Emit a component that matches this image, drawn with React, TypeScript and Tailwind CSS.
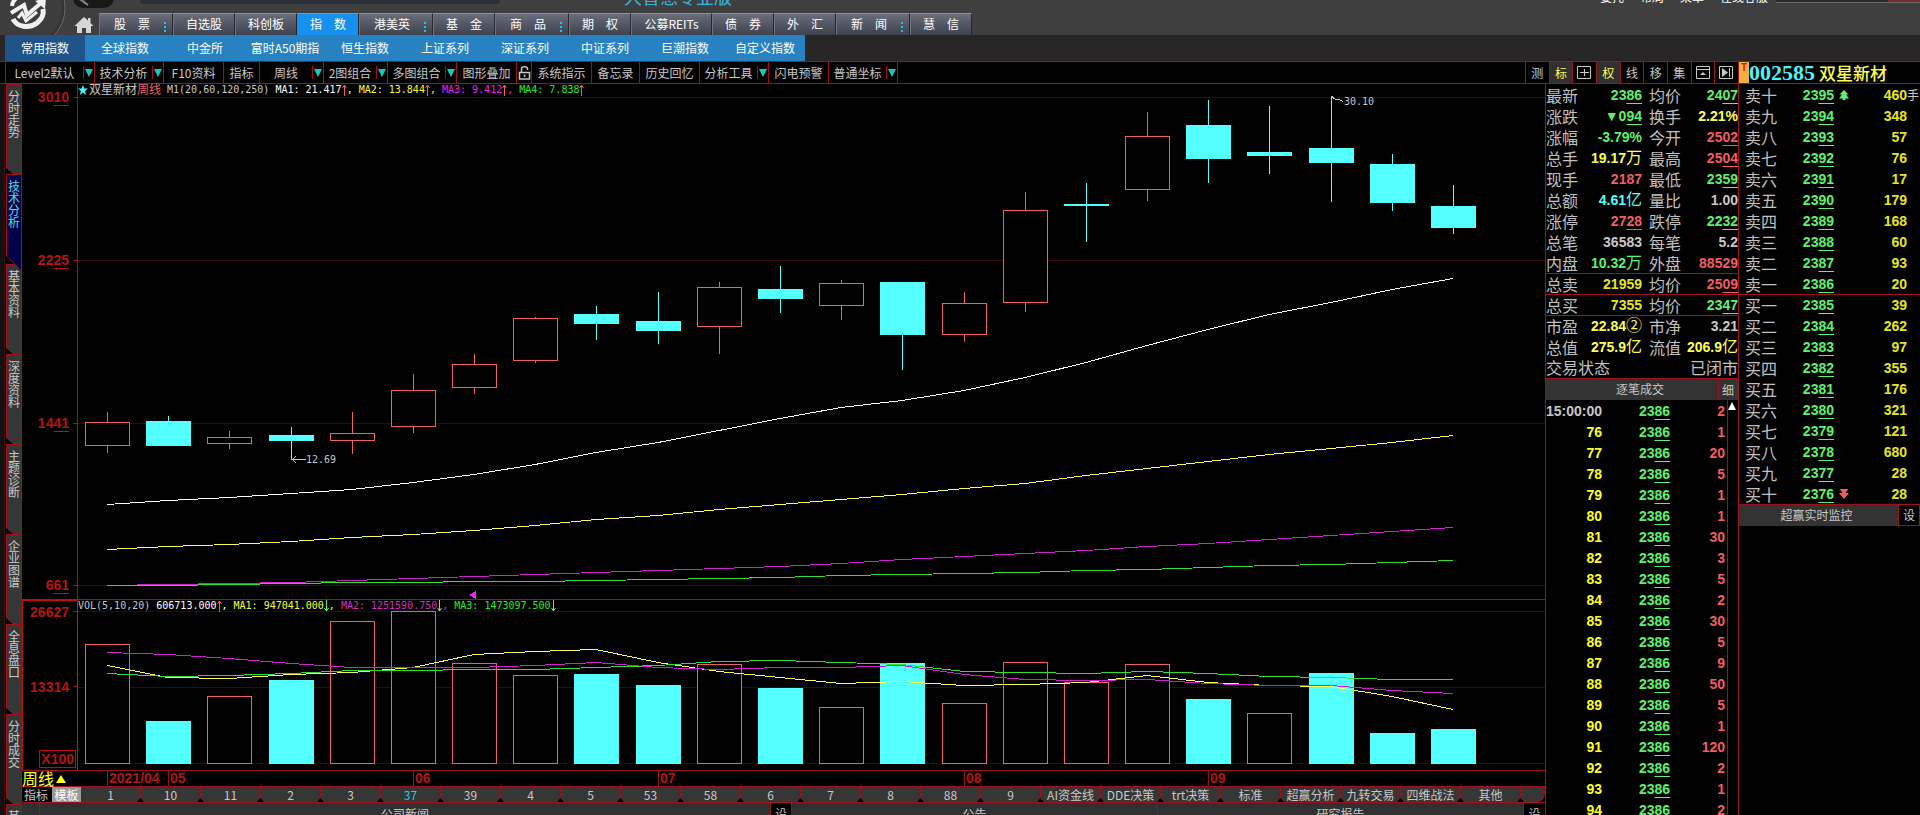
import React from 'react';
import { clsx } from 'clsx';

type Candle = [up: boolean, high: number, top: number, bottom: number, low: number];
type Volume = [up: boolean, top: number];

const STEP_X = 61.18;
const FIRST_X = 29;
const CHART_W = 1467;
const PRICE_H = 515;
const VOL_H = 171;
const VOL_BASE = 165;

const candles: Candle[] = [
  [true, 328, 338, 362, 369],
  [false, 332, 337, 362, 362],
  [true, 347, 353, 360, 365],
  [false, 343, 351, 357, 376],
  [true, 328, 349, 357, 370],
  [true, 290, 306, 343, 349],
  [true, 270, 280, 304, 310],
  [true, 233, 234, 277, 279],
  [false, 222, 230, 240, 256],
  [false, 208, 237, 247, 260],
  [true, 198, 203, 243, 270],
  [false, 182, 205, 215, 229],
  [true, 196, 199, 222, 236],
  [false, 198, 198, 251, 286],
  [true, 208, 219, 251, 258],
  [true, 108, 126, 219, 228],
  [false, 99, 120, 122, 158],
  [true, 28, 52, 106, 117],
  [false, 16, 41, 75, 99],
  [false, 22, 68, 72, 90],
  [false, 12, 64, 79, 118],
  [false, 70, 80, 119, 127],
  [false, 101, 122, 144, 150],
];

const volumes: Volume[] = [
  [true, 45], [false, 122], [true, 97], [false, 81], [true, 22], [true, 12], [true, 64], [true, 76],
  [false, 75], [false, 86], [true, 65], [false, 89], [true, 108], [false, 64], [true, 104], [true, 63],
  [true, 83], [true, 65], [false, 100], [true, 114], [false, 74], [false, 134], [false, 130],
];

const priceLines = [
  {
    color: '#ffffff',
    ys: [420, 416, 413, 409, 405, 398, 390, 380, 368, 358, 346, 334, 323, 316, 306, 293, 278, 261, 245, 230, 218, 205, 194],
  },
  {
    color: '#ffff54',
    ys: [465, 462, 460, 457, 453, 450, 446, 441, 435, 431, 425, 420, 415, 410, 404, 399, 391, 384, 377, 370, 364, 358, 351],
  },
  {
    color: '#d020d0',
    ys: [501, 500, 499, 498, 496, 494, 492, 490, 488, 486, 484, 482, 479, 475, 472, 469, 466, 462, 459, 455, 451, 447, 443],
  },
  {
    color: '#30e030',
    ys: [501, 501, 500, 499, 498, 498, 497, 497, 496, 495, 494, 493, 491, 490, 489, 488, 486, 485, 483, 481, 480, 478, 476],
  },
];

const volumeLines = [
  {
    color: '#ffff54',
    ys: [66, 78, 79, 75, 73, 68, 55, 52, 50, 63, 72, 78, 84, 82, 86, 85, 83, 76, 83, 86, 87, 97, 110],
  },
  {
    color: '#d020d0',
    ys: [53, 55, 59, 64, 68, 68, 68, 66, 63, 68, 70, 68, 68, 66, 75, 80, 81, 80, 84, 86, 86, 91, 94],
  },
  {
    color: '#30e030',
    ys: [74, 77, 76, 74, 71, 71, 70, 70, 68, 66, 62, 61, 63, 65, 72, 73, 74, 72, 74, 77, 78, 80, 80],
  },
];

const priceTicks = [
  { y: 13, label: '3010' },
  { y: 176, label: '2225' },
  { y: 339, label: '1441' },
  { y: 501, label: '661' },
];

const months = [
  { index: 0, label: '2021/04' },
  { index: 1, label: '05' },
  { index: 5, label: '06' },
  { index: 9, label: '07' },
  { index: 14, label: '08' },
  { index: 18, label: '09' },
];

const mainTabs = [
  { label: '股　票', width: 'w-[74px]', more: true },
  { label: '自选股', width: 'w-[62px]' },
  { label: '科创板', width: 'w-[62px]' },
  { label: '指　数', width: 'w-[62px]', active: true },
  { label: '港美英', width: 'w-[74px]', more: true },
  { label: '基　金', width: 'w-[62px]' },
  { label: '商　品', width: 'w-[74px]', more: true },
  { label: '期　权', width: 'w-[62px]' },
  { label: '公募REITs', width: 'w-[81px]' },
  { label: '债　券', width: 'w-[62px]' },
  { label: '外　汇', width: 'w-[62px]' },
  { label: '新　闻', width: 'w-[74px]', more: true },
  { label: '慧　信', width: 'w-[62px]' },
];

const subTabs = ['常用指数', '全球指数', '中金所', '富时A50期指', '恒生指数', '上证系列', '深证系列', '中证系列', '巨潮指数', '自定义指数'];

const tools = [
  { label: 'Level2默认', width: 'w-[89px]', menu: true },
  { label: '技术分析', width: 'w-[69px]', menu: true },
  { label: 'F10资料', width: 'w-[60px]' },
  { label: '指标', width: 'w-9' },
  { label: '周线', width: 'w-16', menu: true },
  { label: '2图组合', width: 'w-16', menu: true },
  { label: '多图组合', width: 'w-[69px]', menu: true },
  { label: '图形叠加', width: 'w-[60px]' },
  { label: 'lock', width: 'w-[15px]' },
  { label: '系统指示', width: 'w-[60px]' },
  { label: '备忘录', width: 'w-12' },
  { label: '历史回忆', width: 'w-[60px]' },
  { label: '分析工具', width: 'w-[69px]', menu: true },
  { label: '闪电预警', width: 'w-[60px]' },
  { label: '普通坐标', width: 'w-[69px]', menu: true },
];

const toggles = ['测', '标', 'grid', '权', '线', '移', '集', 'panel', 'next'];

const sideTabs = ['分时走势', '技术分析', '基本资料', '深度资料', '主题诊断', '企业图谱', '全息盘口', '分时成交', '其他'];

const indicatorTabs = [
  '1', '10', '11', '2', '3', '37', '39', '4', '5', '53', '58', '6', '7', '8', '88', '9',
  'AI资金线', 'DDE决策', 'trt决策', '标准', '超赢分析', '九转交易', '四维战法', '其他',
];

const GREEN = 'text-[#5cf26c]';
const RED = 'text-[#f25c64]';
const YELLOW = 'text-[#ffff54]';
const GOLD = 'text-[#e6e620]';
const GRAY = 'text-[#c8c8c8]';
const CYAN = 'text-[#54ffff]';

type Cell = { label: string; value: string; color: string; price?: boolean };

const quotes: [Cell, Cell][] = [
  [{ label: '最新', value: '2386', color: GREEN, price: true }, { label: '均价', value: '2407', color: GREEN, price: true }],
  [{ label: '涨跌', value: '▼094', color: GREEN, price: true }, { label: '换手', value: '2.21%', color: YELLOW }],
  [{ label: '涨幅', value: '-3.79%', color: GREEN }, { label: '今开', value: '2502', color: RED, price: true }],
  [{ label: '总手', value: '19.17万', color: YELLOW }, { label: '最高', value: '2504', color: RED, price: true }],
  [{ label: '现手', value: '2187', color: RED }, { label: '最低', value: '2359', color: GREEN, price: true }],
  [{ label: '总额', value: '4.61亿', color: CYAN }, { label: '量比', value: '1.00', color: GRAY }],
  [{ label: '涨停', value: '2728', color: RED, price: true }, { label: '跌停', value: '2232', color: GREEN, price: true }],
  [{ label: '总笔', value: '36583', color: GRAY }, { label: '每笔', value: '5.2', color: GRAY }],
  [{ label: '内盘', value: '10.32万', color: GREEN }, { label: '外盘', value: '88529', color: RED }],
  [{ label: '总卖', value: '21959', color: GOLD }, { label: '均价', value: '2509', color: RED, price: true }],
  [{ label: '总买', value: '7355', color: GOLD }, { label: '均价', value: '2347', color: GREEN, price: true }],
  [{ label: '市盈', value: '22.84②', color: YELLOW }, { label: '市净', value: '3.21', color: GRAY }],
  [{ label: '总值', value: '275.9亿', color: YELLOW }, { label: '流值', value: '206.9亿', color: YELLOW }],
];

const ticks: [string, number][] = [
  ['15:00:00', 2], ['76', 1], ['77', 20], ['78', 5], ['79', 1], ['80', 1], ['81', 30], ['82', 3], ['83', 5], ['84', 2],
  ['85', 30], ['86', 5], ['87', 9], ['88', 50], ['89', 5], ['90', 1], ['91', 120], ['92', 2], ['93', 1], ['94', 2],
];

const book: [string, string, number][] = [
  ['卖十', '2395', 460], ['卖九', '2394', 348], ['卖八', '2393', 57], ['卖七', '2392', 76], ['卖六', '2391', 17],
  ['卖五', '2390', 179], ['卖四', '2389', 168], ['卖三', '2388', 60], ['卖二', '2387', 93], ['卖一', '2386', 20],
  ['买一', '2385', 39], ['买二', '2384', 262], ['买三', '2383', 97], ['买四', '2382', 355], ['买五', '2381', 176],
  ['买六', '2380', 321], ['买七', '2379', 121], ['买八', '2378', 680], ['买九', '2377', 28], ['买十', '2376', 28],
];

const xAt = (i: number) => Math.round(FIRST_X + i * STEP_X);
const points = (ys: number[]) => ys.map((y, i) => `${xAt(i)},${y + 0.5}`).join(' ');

// Prices are shown in cents, with the last two digits underlined.
const Price: React.FC<{ value: string }> = ({ value }) => (
  <>
    {value.slice(0, -2)}
    <span className="underline decoration-1 underline-offset-[3px]">{value.slice(-2)}</span>
  </>
);

const Arrow: React.FC<{ down?: boolean }> = ({ down }) => (
  <svg className="h-3 w-[5px] shrink-0" viewBox="0 0 5 12" fill="none" stroke={down ? '#5cf26c' : '#f25c64'}>
    <path d={down ? 'M2.5 0V11M.5 8 2.5 11 4.5 8' : 'M2.5 12V1M.5 4 2.5 1 4.5 4'} />
  </svg>
);

const Logo: React.FC = () => (
  <svg className="h-[35px] w-[116px] shrink-0" viewBox="0 0 116 35">
    <circle cx="25" cy="8" r="40" fill="#343434" stroke="#6a6a6a" />
    <circle cx="25" cy="8" r="37" fill="#3d3d3d" />
    <rect x="73" y="-12" width="41" height="20" rx="10" fill="#181818" />
    <path d="M86 -1 81 0 88 5" fill="none" stroke="#8c8c8c" strokeWidth="2" />
    <g fill="none" stroke="#f0f0f0">
      <path d="M37 -5C26 -8 13 -4 12 6" strokeWidth="4" />
      <path d="M13 19C17 27 29 29 37 23 42 19 44 14 43 9" strokeWidth="5" />
      <path d="M11 13 24 5 27 15 41 3" strokeWidth="4" />
      <path d="M18 18 22 13 26 21 37 12" strokeWidth="3" />
    </g>
    <path d="M35 1 46 -2 45 9Z" fill="#f0f0f0" />
    <path d="M84 17 74.500 26H77V33H82V28H86V33H91V26H93.500L90.500 23V18H88V20.500Z" fill="#d6d6d6" />
  </svg>
);

const ToolIcon: React.FC<{ name: string }> = ({ name }) => (
  <svg className="h-[15px] w-[15px]" viewBox="0 0 15 15" fill="none" stroke="#c8c8c8">
    {name === 'grid' && <path d="M.5 1.500H13.500V13.500H.5ZM7.500 4V11M3 7.500H12" />}
    {name === 'panel' && (
      <>
        <path d="M.5 1.500H13.500V13.500H.5ZM.5 4.500H13.500" />
        <path d="M4 10 7 7 10 10Z" fill="#c8c8c8" stroke="none" />
      </>
    )}
    {name === 'next' && (
      <>
        <path d="M.5 1.500H13.500V13.500H.5ZM10.500 3V12" />
        <path d="M3 3 9 7.500 3 12Z" fill="#c8c8c8" stroke="none" />
      </>
    )}
    {name === 'lock' && <path d="M2.500 7.500H12.500V14H2.500ZM4.500 7V3.500C4.500 1 10.500 1 10.500 3.500V5M7.500 9.500V12" strokeWidth="1.500" />}
  </svg>
);

const Header: React.FC = () => (
  <header className="shrink-0">
    <div className="relative flex h-[35px] items-end overflow-hidden bg-[#3f3f3f]">
      <div className="absolute top-0 left-[140px] h-1 w-[360px] rounded-b-sm bg-[#2b3036]" />
      <h1 className="absolute bottom-[29px] left-[624px] text-lg leading-5 text-[#38b4e0]">大智慧专业版</h1>
      <nav className="absolute right-[152px] bottom-[30px] flex gap-4 text-xs leading-4 text-white">
        <a href="#trade">委托</a>
        <a href="#layout">布局</a>
        <a href="#menu">菜单</a>
        <a href="#service">在线客服</a>
      </nav>
      <div className="absolute top-0 right-0 flex h-[3px] w-36 border-b border-[#6a6a6a] bg-[#2c2c2c]">
        <div className="ml-auto w-8 bg-[#7c2a2a]" />
      </div>
      <Logo />
      <nav className="-ml-[17px] flex h-[22px]">
        {mainTabs.map((tab) => (
          <button
            key={tab.label}
            className={clsx(
              'relative flex items-center justify-center border-t border-r border-l border-t-[#8b909c] border-r-[#24262c] border-l-[#70747e] pb-0.5 text-xs whitespace-nowrap text-white',
              tab.width,
              tab.more && 'pr-2',
              tab.active ? 'bg-[#1890f0]' : 'bg-linear-to-b from-[#6a6e7a] to-[#3e424e]',
            )}
          >
            {tab.label}
            {tab.more && (
              <span className="absolute top-2 right-1.5 flex flex-col gap-0.5">
                <i className="h-0.5 w-0.5 bg-[#20c8f0]" />
                <i className="h-0.5 w-0.5 bg-[#20c8f0]" />
                <i className="h-0.5 w-0.5 bg-[#20c8f0]" />
              </span>
            )}
          </button>
        ))}
      </nav>
    </div>
    <nav className="flex h-[26px] bg-[#272526] pl-[5px]">
      {subTabs.map((tab, i) => (
        <button
          key={tab}
          className={clsx('w-20 text-xs whitespace-nowrap text-white', i === 0 ? 'bg-[#205488]' : 'bg-[#2882c2]')}
        >
          {tab}
        </button>
      ))}
    </nav>
  </header>
);

const Toolbar: React.FC = () => (
  <div className="flex h-[23px] shrink-0 border-y border-[#a01018] text-xs text-[#c8c8c8]">
    <div className="ml-[5px] flex border-l border-[#a01018]">
      {tools.map((tool) => (
        <button
          key={tool.label}
          aria-label={tool.label}
          className={clsx('flex items-stretch border-r border-[#a01018] leading-5 whitespace-nowrap', tool.width)}
        >
          <span className="flex flex-1 items-center justify-center">
            {tool.label === 'lock' ? <ToolIcon name="lock" /> : tool.label}
          </span>
          {tool.menu && (
            <span className="my-1 flex w-[11px] items-center justify-center border-l border-[#a01018]">
              <svg className="h-2 w-2" viewBox="0 0 8 8" fill="#18c8c0">
                <path d="M0 0H8L4 8Z" />
              </svg>
            </span>
          )}
        </button>
      ))}
    </div>
    <div className="ml-auto flex w-[214px] border-l border-[#a01018]">
      {toggles.map((name) => (
        <button
          key={name}
          aria-label={name}
          className={clsx(
            'flex flex-1 items-center justify-center border-r border-[#a01018]',
            name === '标' || name === '权' ? 'bg-[#303030] text-[#ffff54]' : 'text-[#c8c8c8]',
          )}
        >
          {name.length > 1 ? <ToolIcon name={name} /> : name}
        </button>
      ))}
    </div>
    <div className="flex w-[181px] items-center">
      <span className="h-full w-2.5 bg-[#f0b040] text-center font-['Liberation_Sans',sans-serif] text-[10px] leading-3 font-bold text-[#e01010]">
        T
      </span>
      <span className="font-['Liberation_Serif',serif] text-[22px] leading-5 font-bold text-[#54f0f8]">002585</span>
      <span className="ml-1 text-[17px] leading-5 font-medium text-[#ffff54]">双星新材</span>
    </div>
  </div>
);

const SideRail: React.FC = () => (
  <nav className="w-4 shrink-0 overflow-hidden">
    {sideTabs.map((tab, i) => {
      const active = i === 1;

      return (
        <button
          key={tab}
          className={clsx(
            'relative flex h-[90px] w-4 justify-center pt-1.5 text-xs leading-3',
            active ? 'z-10 text-[#40e0f0]' : 'text-[#c8c8c8]',
          )}
        >
          <svg className="absolute inset-0 overflow-visible" width="16" height="90">
            <path
              d={active ? 'M.5.5H15.500V97L.5 82Z' : 'M.5.5H15.500V89.500H7L.5 84Z'}
              fill={active ? '#000048' : '#363636'}
              stroke="#a01018"
            />
          </svg>
          <span className="relative w-3 break-all">{tab}</span>
        </button>
      );
    })}
  </nav>
);

const PricePanel: React.FC = () => (
  <section className="flex min-h-0 flex-[515]">
    <div className="relative w-[55px] shrink-0 font-['Liberation_Sans',sans-serif] text-sm leading-5 font-bold text-[#b41414]">
      {priceTicks.map((tick) => (
        <div
          key={tick.label}
          className="absolute right-0 flex -translate-y-1/2 items-center gap-1"
          style={{ top: `${(tick.y / PRICE_H) * 100}%` }}
        >
          <span>
            <Price value={tick.label} />
          </span>
          <i className="h-px w-1 bg-[#a01018]" />
        </div>
      ))}
    </div>
    <div className="relative min-w-0 flex-1 border-l border-[#a01018]">
      <svg
        className="absolute inset-0 h-full w-full"
        viewBox={`0 0 ${CHART_W} ${PRICE_H}`}
        preserveAspectRatio="none"
        shapeRendering="crispEdges"
        fill="none"
      >
        {priceTicks.map((tick) => (
          <path key={tick.y} d={`M0 ${tick.y + 0.5}H${CHART_W}`} stroke="#3a0606" />
        ))}
        {candles.map(([up, high, top, bottom, low], i) => {
          const x = xAt(i);
          const color = up ? '#f06060' : '#54ffff';

          return (
            <g key={i} stroke={color}>
              <path d={`M${x + 0.5} ${high}V${top}M${x + 0.5} ${bottom}V${low}`} />
              <rect x={x - 21.5} y={top + 0.5} width="44" height={bottom - top - 1} fill={up ? '#000' : color} />
            </g>
          );
        })}
        {priceLines.map((line) => (
          <polyline key={line.color} points={points(line.ys)} stroke={line.color} />
        ))}
        <path d="M215 375.500H228M218 372 215 375.500 218 379M1253 12 1257 15 1260 15 1265 17.500M1253 12V17" stroke="#c8c8c8" />
        <path d="M391 511 398 507V515Z" fill="#ff20ff" />
      </svg>
      <span
        className="absolute -translate-y-1/2 font-['DejaVu_Sans_Mono',monospace] text-[10px] leading-3 text-[#c8c8c8]"
        style={{ left: `${(228 / CHART_W) * 100}%`, top: `${(376 / PRICE_H) * 100}%` }}
      >
        12.69
      </span>
      <span
        className="absolute -translate-y-1/2 font-['DejaVu_Sans_Mono',monospace] text-[10px] leading-3 text-[#c8c8c8]"
        style={{ left: `${(1266 / CHART_W) * 100}%`, top: `${(18 / PRICE_H) * 100}%` }}
      >
        30.10
      </span>
      <div className="absolute top-0 left-0 flex items-center font-['DejaVu_Sans_Mono','Noto_Sans_CJK_SC',monospace] text-[10px] leading-3 whitespace-pre text-[#c8c8c8]">
        <svg className="h-2.5 w-2.5" viewBox="0 0 10 10" fill="#40ffff">
          <path d="M5 0 6.300 3.500H10L7 6 8.200 10 5 7.600 1.800 10 3 6 0 3.500H3.700Z" />
        </svg>
        <span className="ml-px text-xs leading-3">双星新材</span>
        <span className="text-xs leading-3 text-[#f25c64]">周线</span>
        <span className="ml-1.5">M1(20,60,120,250) </span>
        <span className="text-white">MA1: 21.417</span>
        <Arrow />
        <span className="text-white">, </span>
        <span className="text-[#ffff20]">MA2: 13.844</span>
        <Arrow />
        <span className="text-[#ffff20]">, </span>
        <span className="text-[#f020f0]">MA3: 9.412</span>
        <Arrow />
        <span className="text-[#f020f0]">, </span>
        <span className="text-[#20f020]">MA4: 7.838</span>
        <Arrow />
      </div>
    </div>
  </section>
);

const VolumePanel: React.FC = () => (
  <section className="flex min-h-0 flex-[171]">
    <div className="relative w-[55px] shrink-0 border-t-2 border-l border-[#c00c10] font-['Liberation_Sans',sans-serif] text-sm leading-5 font-bold text-[#b41414]">
      <div className="absolute right-0 flex -translate-y-1/2 items-center gap-1" style={{ top: `${(11 / VOL_H) * 100}%` }}>
        26627
        <i className="h-px w-1 bg-[#a01018]" />
      </div>
      <div className="absolute right-0 flex -translate-y-1/2 items-center gap-1" style={{ top: `${(87 / VOL_H) * 100}%` }}>
        13314
        <i className="h-px w-1 bg-[#a01018]" />
      </div>
      <div className="absolute right-px bottom-0.5 border border-[#c00c10] px-px leading-4">X100</div>
    </div>
    <div className="relative min-w-0 flex-1 border-t border-l border-t-[#a01018] border-l-[#e00c10]">
      <svg
        className="absolute inset-0 h-full w-full"
        viewBox={`0 1 ${CHART_W} ${VOL_H - 1}`}
        preserveAspectRatio="none"
        shapeRendering="crispEdges"
        fill="none"
      >
        <path d={`M0 12.500H${CHART_W}M0 88.500H${CHART_W}M0 164.500H${CHART_W}`} stroke="#3a0606" />
        {volumes.map(([up, top], i) => (
          <rect
            key={i}
            x={xAt(i) - 21.5}
            y={top + 0.5}
            width="44"
            height={VOL_BASE - top - 1}
            stroke={up ? '#f06060' : '#54ffff'}
            fill={up ? '#000' : '#54ffff'}
          />
        ))}
        {volumeLines.map((line) => (
          <polyline key={line.color} points={points(line.ys)} stroke={line.color} />
        ))}
      </svg>
      <div className="absolute top-0 left-0 flex items-center font-['DejaVu_Sans_Mono',monospace] text-[10px] leading-3 whitespace-pre text-[#c8c8c8]">
        <span>VOL(5,10,20) </span>
        <span className="text-white">606713.000</span>
        <Arrow />
        <span className="text-white">, </span>
        <span className="text-[#ffff20]">MA1: 947041.000</span>
        <Arrow down />
        <span className="text-[#ffff20]">, </span>
        <span className="text-[#d030d0]">MA2: 1251590.750</span>
        <Arrow down />
        <span className="text-[#d030d0]">, </span>
        <span className="text-[#20f020]">MA3: 1473097.500</span>
        <Arrow down />
      </div>
    </div>
  </section>
);

const ChartFooter: React.FC = () => (
  <footer className="shrink-0 text-xs text-[#c8c8c8]">
    <div className="flex h-4 border-t border-[#a01018]">
      <button className="flex w-14 shrink-0 items-center gap-0.5 text-base leading-[15px] text-[#ffff20]">
        周线
        <svg className="h-2 w-2.5" viewBox="0 0 10 8" fill="#ffff20">
          <path d="M5 0 10 8H0Z" />
        </svg>
      </button>
      <div className="relative flex-1">
        {months.map((month) => (
          <span
            key={month.label}
            className="absolute top-0 border-l border-[#a01018] pl-px font-['Liberation_Sans',sans-serif] text-sm leading-[15px] font-bold text-[#b41414]"
            style={{ left: `${(xAt(month.index) / CHART_W) * 100}%` }}
          >
            {month.label}
          </span>
        ))}
      </div>
    </div>
    <div className="flex h-4 border-t border-[#a01018] bg-[#363636] leading-[15px]">
      <div className="flex gap-0.5 bg-black">
        <button className="w-7">指标</button>
        <button className="w-[29px] bg-[#9a9a9a] text-white">模板</button>
      </div>
      {indicatorTabs.map((tab) => (
        <button
          key={tab}
          className={clsx(
            'relative min-w-0 flex-1 border-r border-[#a01018] whitespace-nowrap',
            tab === '37' && 'text-[#20d0e0]',
          )}
        >
          {tab}
          <svg className="absolute -right-1 bottom-0 z-10 h-1 w-[7px]" viewBox="0 0 7 4">
            <path d="M0 4 3.500 0 7 4Z" fill="#000" />
          </svg>
        </button>
      ))}
      <div className="w-6 bg-black">
        <div className="h-full rounded-br-lg border-r border-b border-[#a01018] bg-[#363636]" />
      </div>
    </div>
    <div className="flex h-[13px] overflow-hidden border-t border-[#a01018] bg-[#303030] text-center leading-[22px]">
      <div className="w-[18px] border-r border-[#a01018]" />
      <h2 className="flex-[2]">公司新闻</h2>
      <button className="h-[22px] w-[22px] border-x border-[#a01018] bg-black">设</button>
      <h2 className="flex-1">公告</h2>
      <h2 className="flex-1 border-l border-[#a01018]">研究报告</h2>
      <button className="h-[22px] w-[22px] border-l border-[#a01018] bg-black">设</button>
    </div>
  </footer>
);

const QuotePanel: React.FC = () => (
  <aside className="w-[193px] shrink-0 overflow-hidden border-l border-[#a01018]">
    <table className="w-full table-fixed border-separate border-spacing-0">
      <colgroup>
        <col className="w-8" />
        <col className="w-16" />
        <col className="w-10" />
        <col />
      </colgroup>
      <tbody>
        {quotes.map(([left, right], row) => (
          <tr key={left.label} className="h-[21px]">
            {[left, right].map((cell, i) => (
              <React.Fragment key={i}>
                <th
                  className={clsx(
                    'border-[#a01018] p-0 text-left text-base leading-5 font-normal whitespace-nowrap text-[#c0c0c0]',
                    row >= 9 && row <= 11 && 'border-t',
                    i === 1 && 'pl-[7px]',
                  )}
                >
                  {cell.label}
                </th>
                <td
                  className={clsx(
                    "border-[#a01018] p-0 text-right font-['Liberation_Sans','Noto_Sans_CJK_SC',sans-serif] text-sm leading-5 font-bold whitespace-nowrap",
                    row >= 9 && row <= 11 && 'border-t',
                    cell.color,
                  )}
                >
                  {cell.price ? (
                    <Price value={cell.value} />
                  ) : (
                    <>
                      {cell.value.replace(/[万亿②]/, '')}
                      <span className="text-base leading-5 font-normal">{cell.value.match(/[万亿②]/)?.[0]}</span>
                    </>
                  )}
                </td>
              </React.Fragment>
            ))}
          </tr>
        ))}
      </tbody>
    </table>
    <div className="flex h-[21px] justify-between text-base leading-5 text-[#c0c0c0]">
      <span>交易状态</span>
      <span>已闭市</span>
    </div>
    <div className="flex h-[22px] border-t border-[#a01018] bg-[#333333] text-xs leading-5 text-[#c8c8c8]">
      <h2 className="flex-1 pl-4 text-center">逐笔成交</h2>
      <button className="w-5 border-x border-[#a01018]">细</button>
    </div>
    <div className="flex">
      <table className="flex-1 table-fixed border-separate border-spacing-0 font-['Liberation_Sans',sans-serif] text-sm leading-5 font-bold">
        <tbody>
          {ticks.map(([time, count], i) => (
            <tr key={time} className="h-[21px]">
              <td className={clsx('w-14 p-0 text-right', i === 0 ? 'text-[#c8c8c8]' : 'text-[#ffff20]')}>{time}</td>
              <td className="w-[68px] p-0 text-right text-[#5cf26c]">
                <Price value="2386" />
              </td>
              <td className="p-0 pr-0.5 text-right text-[#f25c64]">{count}</td>
            </tr>
          ))}
        </tbody>
      </table>
      <div className="w-[11px] border-l border-[#a01018] pt-0.5">
        <button aria-label="向上滚动" className="block h-2 w-2 bg-white">
          <svg className="h-2 w-2" viewBox="0 0 8 8" fill="#000">
            <path d="M0 0H4L0 8ZM4 0H8V8Z" />
          </svg>
        </button>
      </div>
    </div>
  </aside>
);

const OrderBook: React.FC = () => (
  <aside className="w-[182px] shrink-0 border-l border-[#a01018]">
    <table className="w-full table-fixed border-separate border-spacing-0">
      <colgroup>
        <col className="w-[38px]" />
        <col className="w-[57px]" />
        <col className="w-5" />
        <col />
        <col className="w-[13px]" />
      </colgroup>
      <tbody className="font-['Liberation_Sans',sans-serif] text-sm leading-5 font-bold">
        {book.map(([level, price, amount], i) => {
          const line = i === 10 && 'border-t';

          return (
            <tr key={level} className="h-[21px] [&>*]:border-[#a01018] [&>*]:p-0">
              <th
                className={clsx(
                  "text-right font-['Noto_Sans_CJK_SC',sans-serif] text-base leading-5 font-normal whitespace-nowrap text-[#c0c0c0]",
                  line,
                )}
              >
                {level}
              </th>
              <td className={clsx('text-right text-[#5cf26c]', line)}>
                <Price value={price} />
              </td>
              <td className={clsx(line)}>
                {(i === 0 || i === 19) && (
                  <svg className="mx-auto h-2.5 w-2.5" viewBox="0 0 10 10" fill={i === 0 ? '#5cf26c' : '#f25c64'}>
                    <path
                      d={
                        i === 0
                          ? 'M5 0 9.500 4.500H7L10 8.500H6.500V10H3.500V8.500H0L3 4.500H.5Z'
                          : 'M.5 0H9.500L6.500 4H10L5 10 0 4H3.500Z'
                      }
                    />
                  </svg>
                )}
              </td>
              <td className={clsx('text-right text-[#e6e620]', line)}>{amount}</td>
              <td
                className={clsx("font-['Noto_Sans_CJK_SC',sans-serif] text-xs leading-5 font-normal text-[#c8c8c8]", line)}
              >
                {i === 0 && '手'}
              </td>
            </tr>
          );
        })}
      </tbody>
    </table>
    <div className="flex h-[22px] border-t border-[#a01018] bg-[#333333] text-xs leading-5 text-[#c8c8c8]">
      <h2 className="flex-1 pr-1 text-center">超赢实时监控</h2>
      <button className="w-[22px] border-x border-b border-[#a01018] bg-black">设</button>
    </div>
  </aside>
);

export default function App() {
  return (
    <div className="flex h-screen flex-col overflow-hidden bg-black font-['Noto_Sans_CJK_SC',sans-serif]">
      <Header />
      <Toolbar />
      <main className="flex min-h-0 flex-1">
        <div className="mr-px w-[5px] shrink-0 border-r border-[#400808] bg-[#101214]" />
        <SideRail />
        <div className="flex min-w-0 flex-1 flex-col">
          <PricePanel />
          <VolumePanel />
          <ChartFooter />
        </div>
        <QuotePanel />
        <OrderBook />
      </main>
    </div>
  );
}
